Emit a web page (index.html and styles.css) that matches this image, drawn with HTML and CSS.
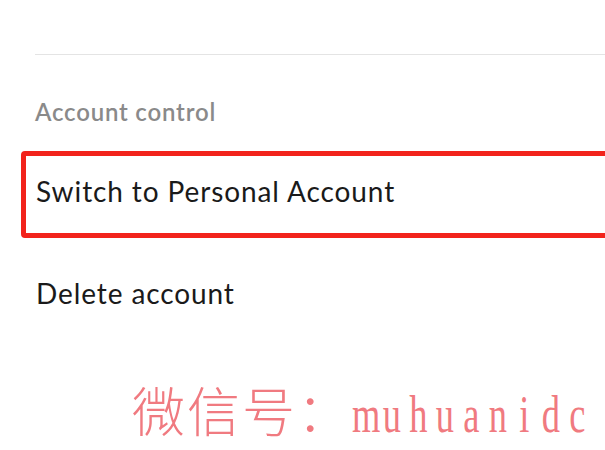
FILE: index.html
```html
<!DOCTYPE html>
<html>
<head>
<meta charset="utf-8">
<link rel="stylesheet" href="styles.css">
</head>
<body>
<div class="page">
  <div class="top-row"></div>
  <div class="section-title">Account control</div>
  <div class="row highlighted">Switch to Personal Account</div>
  <div class="row">Delete account</div>
  <div class="watermark"><span class="wm-cjk">微信号：</span><span class="wm-latin"><span class="wm-ch">m</span><span class="wm-ch">u</span><span class="wm-ch">h</span><span class="wm-ch">u</span><span class="wm-ch">a</span><span class="wm-ch">n</span><span class="wm-ch">i</span><span class="wm-ch">d</span><span class="wm-ch">c</span></span></div>
</div>
</body>
</html>
```
FILE: styles.css
```css
html, body {
  margin: 0;
  padding: 0;
  background: #ffffff;
}
.page {
  position: relative;
  width: 605px;
  height: 450px;
  overflow: hidden;
  font-family: Lato, "Noto Sans", sans-serif;
}
.top-row {
  height: 54px;
  margin-left: 35px;
  border-bottom: 1px solid #e4e4e4;
}
.section-title {
  margin: 42px 0 0 35px;
  font-size: 24px;
  line-height: 30px;
  font-weight: 600;
  letter-spacing: 0.8px;
  color: #8a8a8a;
}
.row {
  font-size: 28px;
  line-height: 34px;
  letter-spacing: 0.9px;
  color: #1a1a1a;
  padding-left: 36px;
}
.highlighted {
  margin: 24px -20px 0 21px;
  padding: 18px 0 25px 10px;
  border: 5px solid #f2231c;
  border-radius: 4px;
}
.row + .row {
  margin-top: 38px;
}
.watermark {
  position: absolute;
  left: 132px;
  top: 379px;
  color: #f07a80;
  white-space: nowrap;
  line-height: 60px;
}
.wm-cjk {
  font-family: "Noto Sans CJK SC", sans-serif;
  font-weight: 300;
  font-size: 53px;
  letter-spacing: 2px;
}
.wm-latin {
  display: inline-block;
  font-family: "Liberation Serif", serif;
  font-size: 52px;
  transform: scaleX(0.7);
  transform-origin: left center;
}
.wm-ch {
  display: inline-block;
  width: 37.9px;
  text-align: center;
}
```
